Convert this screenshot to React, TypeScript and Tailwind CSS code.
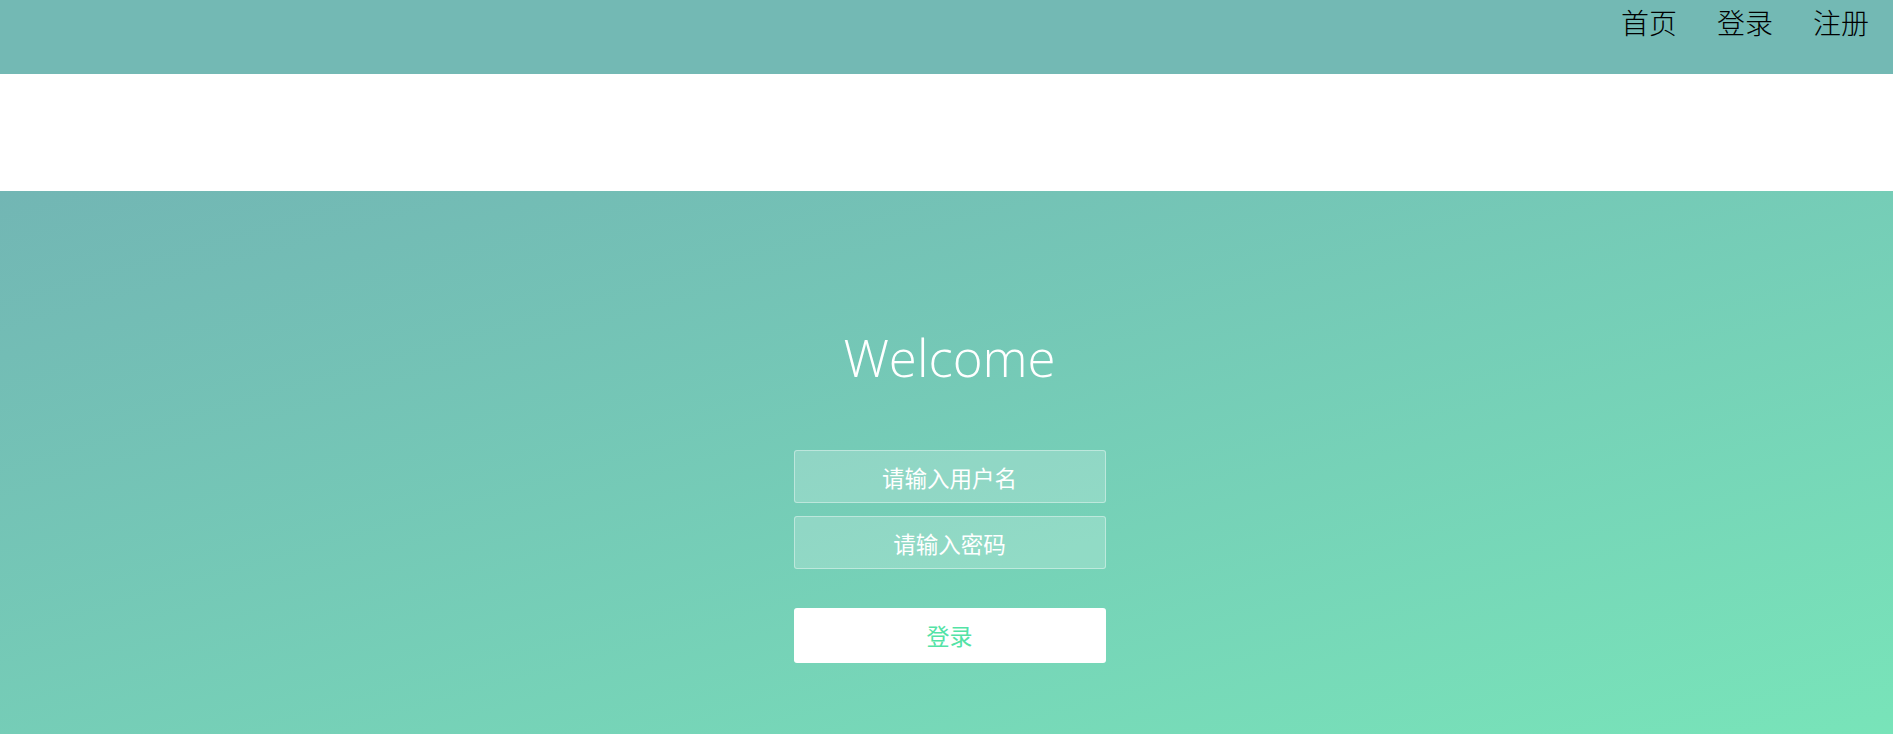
import React from 'react';

const cjk = { fontFamily: '"Noto Sans CJK SC", "Liberation Sans", sans-serif' };

const App = () => {
  return (
    <div className="h-screen flex flex-col bg-white" style={cjk}>
      <header className="h-[74px] bg-[#73b9b4] flex justify-end items-start pr-[24px]">
        <nav className="flex gap-[40px] text-[28px] font-light leading-[44px] text-black">
          <a href="#">首页</a>
          <a href="#">登录</a>
          <a href="#">注册</a>
        </nav>
      </header>
      <div className="h-[117px] bg-white" />
      <main className="flex-1 bg-linear-to-br from-[#72b6b4] to-[#78e4b9] flex flex-col items-center pt-[141px] pl-[6px]">
        <h1
          className="text-white text-[51px] font-light leading-none"
          style={{ fontFamily: '"Open Sans", sans-serif' }}
        >
          Welcome
        </h1>
        <form className="mt-[67px] flex flex-col items-center">
          <input
            type="text"
            placeholder="请输入用户名"
            className="w-[312px] h-[53px] bg-white/20 border border-white/40 rounded-[3px] text-center text-[22.5px] text-white placeholder:text-white outline-none"
          />
          <input
            type="password"
            placeholder="请输入密码"
            className="mt-[13px] w-[312px] h-[53px] bg-white/20 border border-white/40 rounded-[3px] text-center text-[22.5px] text-white placeholder:text-white outline-none"
          />
          <button
            type="button"
            className="mt-[39px] w-[312px] h-[55px] bg-white rounded-[3px] text-[23px] text-[#53e3a6]"
          >
            登录
          </button>
        </form>
      </main>
    </div>
  );
};

export default App;
